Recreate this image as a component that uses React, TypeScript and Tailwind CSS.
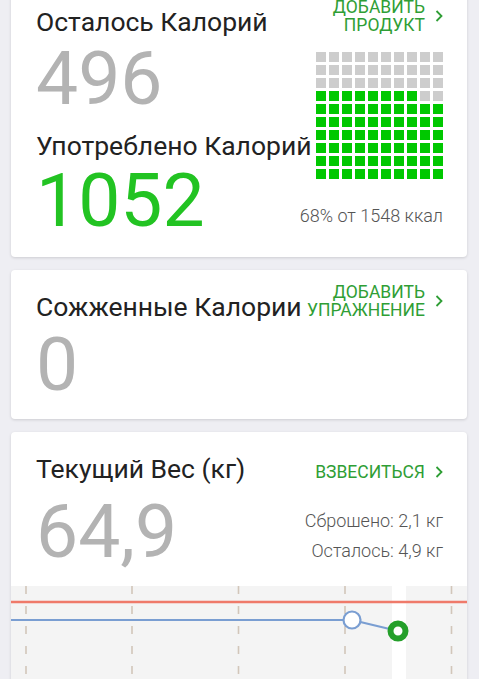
import React from 'react';

function Chevron() {
  return (
    <svg width="8" height="12" viewBox="0 0 8 12" fill="none" className="shrink-0">
      <polyline points="1.5,1 6.5,6 1.5,11" stroke="#2f9e35" strokeWidth="1.8" />
    </svg>
  );
}

function ActionLink({ lines }: { lines: string[] }) {
  return (
    <div className="flex shrink-0 items-center gap-[10px] mb-[3px]">
      <div className="text-right text-[17.5px] leading-[18px] text-[#2f9e35] uppercase whitespace-nowrap">
        {lines.map((l) => (
          <div key={l}>{l}</div>
        ))}
      </div>
      <Chevron />
    </div>
  );
}

function Card({ className, children }: { className?: string; children: React.ReactNode }) {
  return (
    <div className={`bg-white rounded-[4px] shadow-[0_1px_3px_rgba(0,0,0,0.14)] ${className ?? ''}`}>{children}</div>
  );
}

// 68 of 100 filled, counted from the bottom rows, partial row filled from the left
const cells = Array.from({ length: 100 }, (_, i) => {
  const row = Math.floor(i / 10);
  const col = i % 10;
  return row > 3 || (row === 3 && col < 8);
});

function WeightChart() {
  const dashX = [15, 121, 227.5, 334, 440.5];
  return (
    <svg width="456" height="100" viewBox="0 0 456 100" className="block">
      <rect x="0" y="0" width="456" height="100" fill="#f4f4f4" />
      <rect x="381" y="0" width="14" height="100" fill="#ffffff" />
      {dashX.map((x) => (
        <line key={x} x1={x} y1="0" x2={x} y2="100" stroke="#d2c6ba" strokeWidth="1.6" strokeDasharray="8 12" />
      ))}
      <line x1="0" y1="16" x2="456" y2="16" stroke="#ef7a6a" strokeWidth="2.5" />
      <line x1="0" y1="34" x2="341" y2="34" stroke="#7a9ed2" strokeWidth="2.2" />
      <line x1="341" y1="34" x2="387" y2="45" stroke="#7a9ed2" strokeWidth="2.2" />
      <circle cx="341" cy="34" r="8.5" fill="#ffffff" stroke="#7a9ed2" strokeWidth="2.2" />
      <circle cx="387" cy="45" r="7.5" fill="#ffffff" stroke="#249f2a" strokeWidth="6" />
    </svg>
  );
}

export default function App() {
  return (
    <div className="h-[679px] overflow-hidden bg-[#eeeef3] pl-[11px] pr-[12px] font-[Roboto,sans-serif]">
      <div className="flex flex-col gap-[13px]">
        {/* calories left / eaten */}
        <Card className="-mt-[15px] pt-[13px] pb-[19px] pl-[25px] pr-[24px]">
          <div className="flex justify-between items-end">
            <div className="min-w-0 text-[26.5px] leading-[30px] text-[#222] whitespace-nowrap">Осталось Калорий</div>
            <ActionLink lines={['Добавить', 'продукт']} />
          </div>
          <div className="flex items-start">
            <div className="flex flex-1 min-w-0 flex-col">
              <div className="mt-[3px] text-[75px] leading-[76px] text-[#b3b3b3]">496</div>
              <div className="mt-[15px] text-[26.5px] leading-[30px] text-[#222] whitespace-nowrap">Употреблено Калорий</div>
              <div className="mt-[1px] text-[75px] leading-[76px] text-[#22c322]">1052</div>
            </div>
            <div className="flex shrink-0 flex-col items-end">
              <div className="mt-[15px] grid grid-cols-10 gap-[3px]">
                {cells.map((green, i) => (
                  <div key={i} className={`w-[10px] h-[10px] ${green ? 'bg-[#00c800]' : 'bg-[#cdcdcd]'}`} />
                ))}
              </div>
              <div className="mt-[27px] text-[18px] leading-[20px] font-light text-[#555] whitespace-nowrap">
                68% от 1548 ккал
              </div>
            </div>
          </div>
        </Card>

        {/* burned */}
        <Card className="pt-[13px] pb-[17px] pl-[25px] pr-[24px]">
          <div className="flex justify-between items-end">
            <div className="min-w-0 text-[26.5px] leading-[30px] text-[#222] whitespace-nowrap">Сожженные Калории</div>
            <ActionLink lines={['Добавить', 'упражнение']} />
          </div>
          <div className="mt-[4px] text-[75px] leading-[76px] text-[#b3b3b3]">0</div>
        </Card>

        {/* weight */}
        <Card className="overflow-hidden">
          <div className="pt-[22px] pl-[25px] pr-[24px]">
            <div className="flex justify-between items-end">
              <div className="text-[26.5px] leading-[30px] text-[#222] whitespace-nowrap">Текущий Вес (кг)</div>
              <ActionLink lines={['Взвеситься']} />
            </div>
            <div className="flex justify-between items-start">
              <div className="mt-[9px] text-[75px] leading-[76px] text-[#b3b3b3]">64,9</div>
              <div className="mt-[27px] flex flex-col items-end gap-[10px] text-[18px] leading-[20px] font-light text-[#555] whitespace-nowrap">
                <div>Сброшено: 2,1 кг</div>
                <div>Осталось: 4,9 кг</div>
              </div>
            </div>
          </div>
          <div className="mt-[17px]">
            <WeightChart />
          </div>
        </Card>
      </div>
    </div>
  );
}
